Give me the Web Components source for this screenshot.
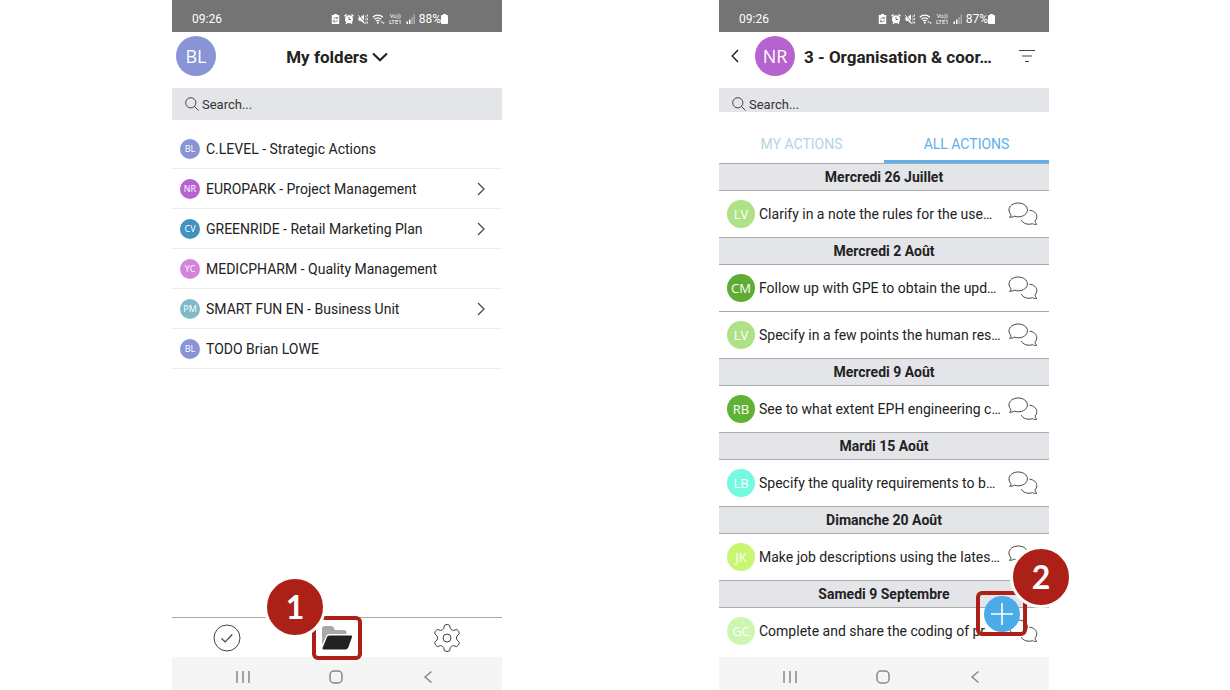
<!DOCTYPE html>
<html lang="en">
<head>
<meta charset="utf-8">
<meta name="viewport" content="width=device-width, initial-scale=1">
<title>Folders and actions</title>
<style>
    body {
        margin: 0;
        background: #fff;
        color: #222;
        font: 14px/20px Roboto, "Liberation Sans", sans-serif;
    }
    main {
        display: grid;
        grid-template-columns: 1fr 1fr;
        gap: 217px;
        min-height: 100vh;
        padding: 0 181px 0 172px;
        box-sizing: border-box;
    }
</style>
</head>
<body>
<main>
    <phone-screen battery="88%">
        <folders-header slot="header" initials="BL" color="#8894d6">My folders</folders-header>
        <search-box slot="header"></search-box>
        <folder-list>
            <folder-row initials="BL" color="#8894d6">C.LEVEL - Strategic Actions</folder-row>
            <folder-row initials="NR" color="#b763cf" more>EUROPARK - Project Management</folder-row>
            <folder-row initials="CV" color="#4093c0" more>GREENRIDE - Retail Marketing Plan</folder-row>
            <folder-row initials="YC" color="#d383dc">MEDICPHARM - Quality Management</folder-row>
            <folder-row initials="PM" color="#7fb8c6" more>SMART FUN EN - Business Unit</folder-row>
            <folder-row initials="BL" color="#8894d6">TODO Brian LOWE</folder-row>
        </folder-list>
        <bottom-nav slot="footer"><callout-mark side="left">1</callout-mark></bottom-nav>
    </phone-screen>

    <phone-screen battery="87%">
        <project-header slot="header" initials="NR" color="#b763cf">3 - Organisation &amp; coor…</project-header>
        <search-box slot="header" short></search-box>
        <action-tabs slot="header"></action-tabs>
        <day-group day="Mercredi 26 Juillet">
            <action-row initials="LV" color="#afe286">Clarify in a note the rules for the use…</action-row>
        </day-group>
        <day-group day="Mercredi 2 Août">
            <action-row initials="CM" color="#5eac33">Follow up with GPE to obtain the upd…</action-row>
            <action-row initials="LV" color="#afe286">Specify in a few points the human res…</action-row>
        </day-group>
        <day-group day="Mercredi 9 Août">
            <action-row initials="RB" color="#60b237">See to what extent EPH engineering c…</action-row>
        </day-group>
        <day-group day="Mardi 15 Août">
            <action-row initials="LB" color="#75fae2">Specify the quality requirements to b…</action-row>
        </day-group>
        <day-group day="Dimanche 20 Août">
            <action-row initials="JK" color="#c7f672">Make job descriptions using the lates…</action-row>
        </day-group>
        <day-group day="Samedi 9 Septembre">
            <action-row initials="GC" color="#cdf6b2">Complete and share the coding of pr…</action-row>
        </day-group>
        <add-button slot="floating"><callout-mark side="right">2</callout-mark></add-button>
    </phone-screen>
</main>

<script>
const ICONS = {
    saver: [9, 12, '<path d="M3 1h3v1h2.2v9H.8V2H3z" fill="#fff"/><path d="M2.7 6.2a2 2 0 0 1 3.5-.9M6.3 7.2a2 2 0 0 1-3.5.9M6.5 4v1.6H5M2.5 9.300V7.700H4" fill="none" stroke="#747474" stroke-width=".8"/>'],
    alarm: [10, 12, '<circle cx="5" cy="6.300" r="4" fill="#fff"/><path d="M.5 3.200 2.500 1.500M9.500 3.200 7.500 1.500M2 10.800l1-1.200M8 10.800 7 9.600" stroke="#fff" stroke-width="1.400"/><path d="M5 4v2.500h2" fill="none" stroke="#747474"/>'],
    mute: [10, 12, '<path d="M.5 4.200h2L6 1.500v9L2.500 7.800h-2z" fill="#fff"/><path d="M.5 1.500l7 9" stroke="#747474" stroke-width="1.200"/><path d="M.3 2.200l7 9M8 2.500v2M8 5.500v2M8 8.500v2M9.600 1.500v2M9.600 5v2M9.600 8.500v2" stroke="#fff" stroke-width=".9"/>'],
    wifi: [13, 12, '<path d="M.8 4.300a7 7 0 0 1 10 0M2.500 6.200a4.600 4.600 0 0 1 6.600 0M4.100 8a2.400 2.400 0 0 1 3.400 0" fill="none" stroke="#fff" stroke-width="1.300"/><circle cx="5.800" cy="9.700" r="1" fill="#fff"/><path d="M8.500 9.500 9.700 8l1.200 1.500zM10.400 9.500h2.400L11.600 11z" fill="#fff"/>'],
    signal: [9, 12, '<path d="M.5 8.500H2V11H.5zM3 6.500h1.500V11H3z" fill="#fff"/><path d="M5.300 4h1.500v7H5.300zM7.500 1.500H9V11H7.500z" fill="#aaa"/>'],
    battery: [7, 12, '<path d="M2 1h3v1h1q1 0 1 1v7q0 1-1 1H1q-1 0-1-1V3q0-1 1-1h1z" fill="#fff"/>'],
    search: [14, 14, '<circle cx="5.800" cy="5.800" r="5.100"/><path d="m9.400 9.400 4.200 4.200"/>'],
    down: [16, 10, '<path d="M1 1.500 8 8.300l7-6.800" stroke="#222" stroke-width="2.200"/>'],
    next: [8, 14, '<path d="m1 1 6 6-6 6" stroke-width="1.200"/>'],
    back: [8, 14, '<path d="M7 1 1.200 7 7 13" stroke="#222" stroke-width="1.400"/>'],
    filter: [16, 14, '<path d="M0 1.500h16M3 7h10M6 12.500h4" stroke-width="1.200"/>'],
    check: [28, 28, '<circle cx="14" cy="14" r="13"/><path d="m8.500 14.500 3.700 3.500 7-7.500" stroke-width="1.200"/>'],
    folder: [32, 26, '<path d="M1 20V3.500Q1 1 3.500 1H10q2.500 0 3 2l.7 2H23q2.500 0 2.500 2.500V9H8Q6 9 5.200 11z" fill="#a8a8a8" stroke="none"/><path d="M8.200 10.500H30q1.700 0 1 1.600l-3.700 10.500q-.6 1.800-2.500 1.800H2.500q-1.500 0-1-1.500L6 12q.5-1.500 2.200-1.500z" fill="#222" stroke="none"/>'],
    gear: [28, 28, '<circle cx="14" cy="14" r="4"/><path d="M10.700 4.500 11.500 1.200A5 5 0 0 1 16.500 1.200L17.300 4.500Q18.500 6.400 20.600 6.400L23.800 5.400A5 5 0 0 1 26.300 9.800L23.900 12.100Q23 14 23.900 15.900L26.300 18.200A5 5 0 0 1 23.800 22.600L20.600 21.600Q18.500 21.600 17.300 23.500L16.500 26.800A5 5 0 0 1 11.500 26.800L10.700 23.500Q9.500 21.600 7.400 21.600L4.200 22.600A5 5 0 0 1 1.700 18.200L4.100 15.900Q5 14 4.100 12.100L1.700 9.800A5 5 0 0 1 4.200 5.400L7.400 6.400Q9.500 6.400 10.700 4.500z" stroke-linejoin="round"/>'],
    chat: [30, 24, '<path d="M1.500 15.200C3 14.400 3.200 13.300 2.700 12.200 1.600 10.900 1 9.500 1 7.900 1 4 5 1 10.200 1s9.200 3 9.200 6.900-4 6.900-9.200 6.900c-1.400 0-2.700-.2-3.900-.7-1.400.9-3 1.300-4.800 1.100z"/><path d="M21.500 8.200c4.200.3 7.300 3.100 7.300 6.500 0 1.600-.6 3-1.700 4.100 0 1.500.5 2.600 1.700 3.500-1.700.3-3.100.1-4.400-.6-4.500 1.400-9.300-.1-11.200-3.600"/>'],
    recents: [16, 16, '<path d="M2 2v12M8 2v12M14 2v12" stroke="#888" stroke-width="1.500"/>'],
    home: [16, 16, '<rect x="2" y="2" width="12" height="12" rx="4" stroke="#888" stroke-width="1.500"/>'],
    return: [16, 16, '<path d="M11.500 2.500 5 8l6.500 5.500" stroke="#888" stroke-width="1.500"/>'],
    plus: [24, 24, '<path d="M12 1v22M1 12h22" stroke="#fff" stroke-width="1.600"/>']
};

function icon(name) {
    const [w, h, body] = ICONS[name];
    return `<svg width="${w}" height="${h}" viewBox="0 0 ${w} ${h}" fill="none" stroke="#444" aria-hidden="true">${
        ['saver', 'alarm', 'mute', 'wifi', 'signal', 'battery'].includes(name) ? `<g stroke="none">${body}</g>` : body
    }</svg>`;
}

const BASE = `
    :host { display: block; }
    * { box-sizing: border-box; }
    svg { display: block; flex: none; }
    button, a, input { font: inherit; color: inherit; text-decoration: none; }
    button { margin: 0; padding: 0; border: 0; background: none; }
`;

class BaseElement extends HTMLElement {
    constructor() {
        super();
        this.attachShadow({ mode: 'open' });
    }
    connectedCallback() {
        this.shadowRoot.innerHTML = `<style>${BASE}${this.styles()}</style>${this.render()}`;
    }
    avatar(size) {
        return `<user-avatar size="${size}" color="${this.getAttribute('color')}">${this.getAttribute('initials')}</user-avatar>`;
    }
}

class UserAvatar extends BaseElement {
    styles() {
        const size = this.getAttribute('size');
        const font = { small: 9, medium: 13, large: 18 }[size];
        const box = { small: 20, medium: 28, large: 40 }[size];
        return `
            :host {
                display: grid;
                place-items: center;
                flex: none;
                width: ${box}px;
                height: ${box}px;
                border-radius: 50%;
                background: ${this.getAttribute('color')};
                color: #fff;
                font: ${font}px/${box}px "Open Sans", "Noto Sans", sans-serif;
            }
        `;
    }
    render() {
        return `<span><slot></slot></span>`;
    }
}
customElements.define('user-avatar', UserAvatar);

class StatusBar extends BaseElement {
    styles() {
        return `
            :host {
                display: flex;
                align-items: center;
                justify-content: space-between;
                height: 32px;
                padding: 6px 54px 0 20px;
                background: #747474;
                color: #fff;
                font-size: 12px;
            }
            div { display: flex; align-items: center; gap: 4px; }
            .lte { font-size: 6px; line-height: 6px; text-align: center; }
            .power { display: flex; align-items: center; }
        `;
    }
    render() {
        return `
            <span>09:26</span>
            <div>
                ${icon('saver')}${icon('alarm')}${icon('mute')}${icon('wifi')}
                <span class="lte">Vo))<br>LTE1</span>
                ${icon('signal')}
                <span class="power">${this.getAttribute('battery')}${icon('battery')}</span>
            </div>
        `;
    }
}
customElements.define('status-bar', StatusBar);

class SystemBar extends BaseElement {
    styles() {
        return `
            :host {
                display: flex;
                align-items: flex-start;
                justify-content: space-between;
                height: 33px;
                padding: 12px 66px 0 63px;
                background: #f5f5f5;
                box-sizing: border-box;
            }
        `;
    }
    render() {
        return `
            <button aria-label="Recent apps">${icon('recents')}</button>
            <button aria-label="Home">${icon('home')}</button>
            <button aria-label="Back">${icon('return')}</button>
        `;
    }
}
customElements.define('system-bar', SystemBar);

class PhoneScreen extends BaseElement {
    styles() {
        return `
            :host {
                display: flex;
                flex-direction: column;
                position: relative;
                min-width: 0;
            }
            status-bar { box-sizing: border-box; }
            .content { flex: 1; }
        `;
    }
    render() {
        return `
            <status-bar battery="${this.getAttribute('battery')}"></status-bar>
            <slot name="header"></slot>
            <div class="content"><slot></slot></div>
            <slot name="footer"></slot>
            <system-bar></system-bar>
            <slot name="floating"></slot>
        `;
    }
}
customElements.define('phone-screen', PhoneScreen);

class FoldersHeader extends BaseElement {
    styles() {
        return `
            header {
                display: grid;
                grid-template-columns: 40px 1fr 40px;
                align-items: center;
                padding: 4px 4px 12px;
            }
            h1 { display: grid; justify-items: center; margin: 0; padding-top: 2px; font-size: 17px; line-height: 24px; }
            button { display: flex; align-items: center; gap: 4px; }
        `;
    }
    render() {
        return `
            <header>
                ${this.avatar('large')}
                <h1><button><span><slot></slot></span>${icon('down')}</button></h1>
            </header>
        `;
    }
}
customElements.define('folders-header', FoldersHeader);

class ProjectHeader extends BaseElement {
    styles() {
        return `
            header {
                display: flex;
                align-items: center;
                padding: 4px 14px 12px 12px;
            }
            h1 { flex: 1; margin: 0 0 0 9px; padding-top: 2px; font-size: 17px; line-height: 24px; white-space: nowrap; }
            .back { margin-right: 16px; }
        `;
    }
    render() {
        return `
            <header>
                <button class="back" aria-label="Back">${icon('back')}</button>
                ${this.avatar('large')}
                <h1><slot></slot></h1>
                <button aria-label="Filter">${icon('filter')}</button>
            </header>
        `;
    }
}
customElements.define('project-header', ProjectHeader);

class SearchBox extends BaseElement {
    styles() {
        return `
            :host { height: 32px; background: #e4e5e9; overflow: hidden; }
            :host([short]) { height: 24px; }
            label { display: flex; align-items: center; gap: 3px; height: 32px; padding: 0 13px; }
            input { flex: 1; min-width: 0; padding: 2px 0 0; border: 0; outline: 0; background: none; font-size: 13px; }
            input::placeholder { color: #333; opacity: 1; }
        `;
    }
    render() {
        return `<label>${icon('search')}<input type="search" placeholder="Search..." aria-label="Search"></label>`;
    }
}
customElements.define('search-box', SearchBox);

class FolderList extends BaseElement {
    styles() {
        return `:host { padding-top: 9px; }`;
    }
    render() {
        return `<nav aria-label="Folders"><slot></slot></nav>`;
    }
}
customElements.define('folder-list', FolderList);

class FolderRow extends BaseElement {
    styles() {
        return `
            a {
                display: flex;
                align-items: center;
                gap: 6px;
                height: 40px;
                padding: 0 17px 0 8px;
                border-bottom: 1px solid #eee;
            }
            span { flex: 1; padding-top: 1px; white-space: nowrap; }
        `;
    }
    render() {
        return `<a href="#">${this.avatar('small')}<span><slot></slot></span>${this.hasAttribute('more') ? icon('next') : ''}</a>`;
    }
}
customElements.define('folder-row', FolderRow);

class BottomNav extends BaseElement {
    styles() {
        return `
            nav {
                display: grid;
                grid-template: 100% / repeat(3, 1fr);
                place-items: center;
                height: 40px;
                border-top: 1px solid #aaa;
            }
            .marked { position: relative; display: grid; place-items: center; width: 50px; height: 44px; }
            .marked ::slotted(callout-mark) { position: absolute; inset: 0; }
        `;
    }
    render() {
        return `
            <nav>
                <button aria-label="My actions">${icon('check')}</button>
                <div class="marked"><button aria-label="Folders">${icon('folder')}</button><slot></slot></div>
                <button aria-label="Settings">${icon('gear')}</button>
            </nav>
        `;
    }
}
customElements.define('bottom-nav', BottomNav);

class ActionTabs extends BaseElement {
    styles() {
        return `
            div { display: grid; grid-template-columns: 1fr 1fr; padding-top: 15px; }
            button { height: 36px; border-bottom: 3px solid transparent; color: #b5d3e6; }
            button[aria-selected="true"] { border-color: #5db0ea; color: #5db0ea; }
        `;
    }
    render() {
        return `
            <div role="tablist">
                <button role="tab" aria-selected="false">MY ACTIONS</button>
                <button role="tab" aria-selected="true">ALL ACTIONS</button>
            </div>
        `;
    }
}
customElements.define('action-tabs', ActionTabs);

class DayGroup extends BaseElement {
    styles() {
        return `
            h2 {
                height: 28px;
                margin: 0;
                border: solid #aaa;
                border-width: 1px 0;
                background: #e4e5e9;
                font-size: 14px;
                line-height: 26px;
                font-weight: 700;
                text-align: center;
            }
            ::slotted(:not(:first-child)) { border-top: 1px solid #aaa; }
        `;
    }
    render() {
        return `<h2>${this.getAttribute('day')}</h2><slot></slot>`;
    }
}
customElements.define('day-group', DayGroup);

class ActionRow extends BaseElement {
    styles() {
        return `
            div { display: flex; align-items: center; gap: 4px; height: 46px; padding: 0 11px 0 8px; }
            span { flex: 1; min-width: 0; white-space: nowrap; }
        `;
    }
    render() {
        return `<div>${this.avatar('medium')}<span><slot></slot></span><button aria-label="Comments">${icon('chat')}</button></div>`;
    }
}
customElements.define('action-row', ActionRow);

// Floating over the list, above the system bar
class AddButton extends BaseElement {
    styles() {
        return `
            :host {
                position: absolute;
                right: 22px;
                bottom: 54px;
                display: grid;
                place-items: center;
                width: 51px;
                height: 45px;
            }
            button { display: grid; place-items: center; width: 36px; height: 36px; border-radius: 50%; background: #4aabe8; }
            ::slotted(callout-mark) { position: absolute; inset: 0; }
        `;
    }
    render() {
        return `<button aria-label="Add action">${icon('plus')}</button><slot></slot>`;
    }
}
customElements.define('add-button', AddButton);

// Red frame round its parent, with a numbered disc on one corner
class CalloutMark extends BaseElement {
    styles() {
        return `
            :host {
                z-index: 2;
                box-sizing: border-box;
                border: 4px solid #ad2018;
                border-radius: 6px;
                pointer-events: none;
            }
            b {
                position: absolute;
                top: -44px;
                left: -52px;
                width: 62px;
                height: 62px;
                border: 3px solid #fff;
                border-radius: 50%;
                background: #ad2018;
                color: #fff;
                font: 700 32px/56px Lato, "Open Sans", sans-serif;
                text-align: center;
            }
            :host([side="right"]) b { top: -49px; left: 30px; }
        `;
    }
    render() {
        return `<b><slot></slot></b>`;
    }
}
customElements.define('callout-mark', CalloutMark);
</script>
</body>
</html>
